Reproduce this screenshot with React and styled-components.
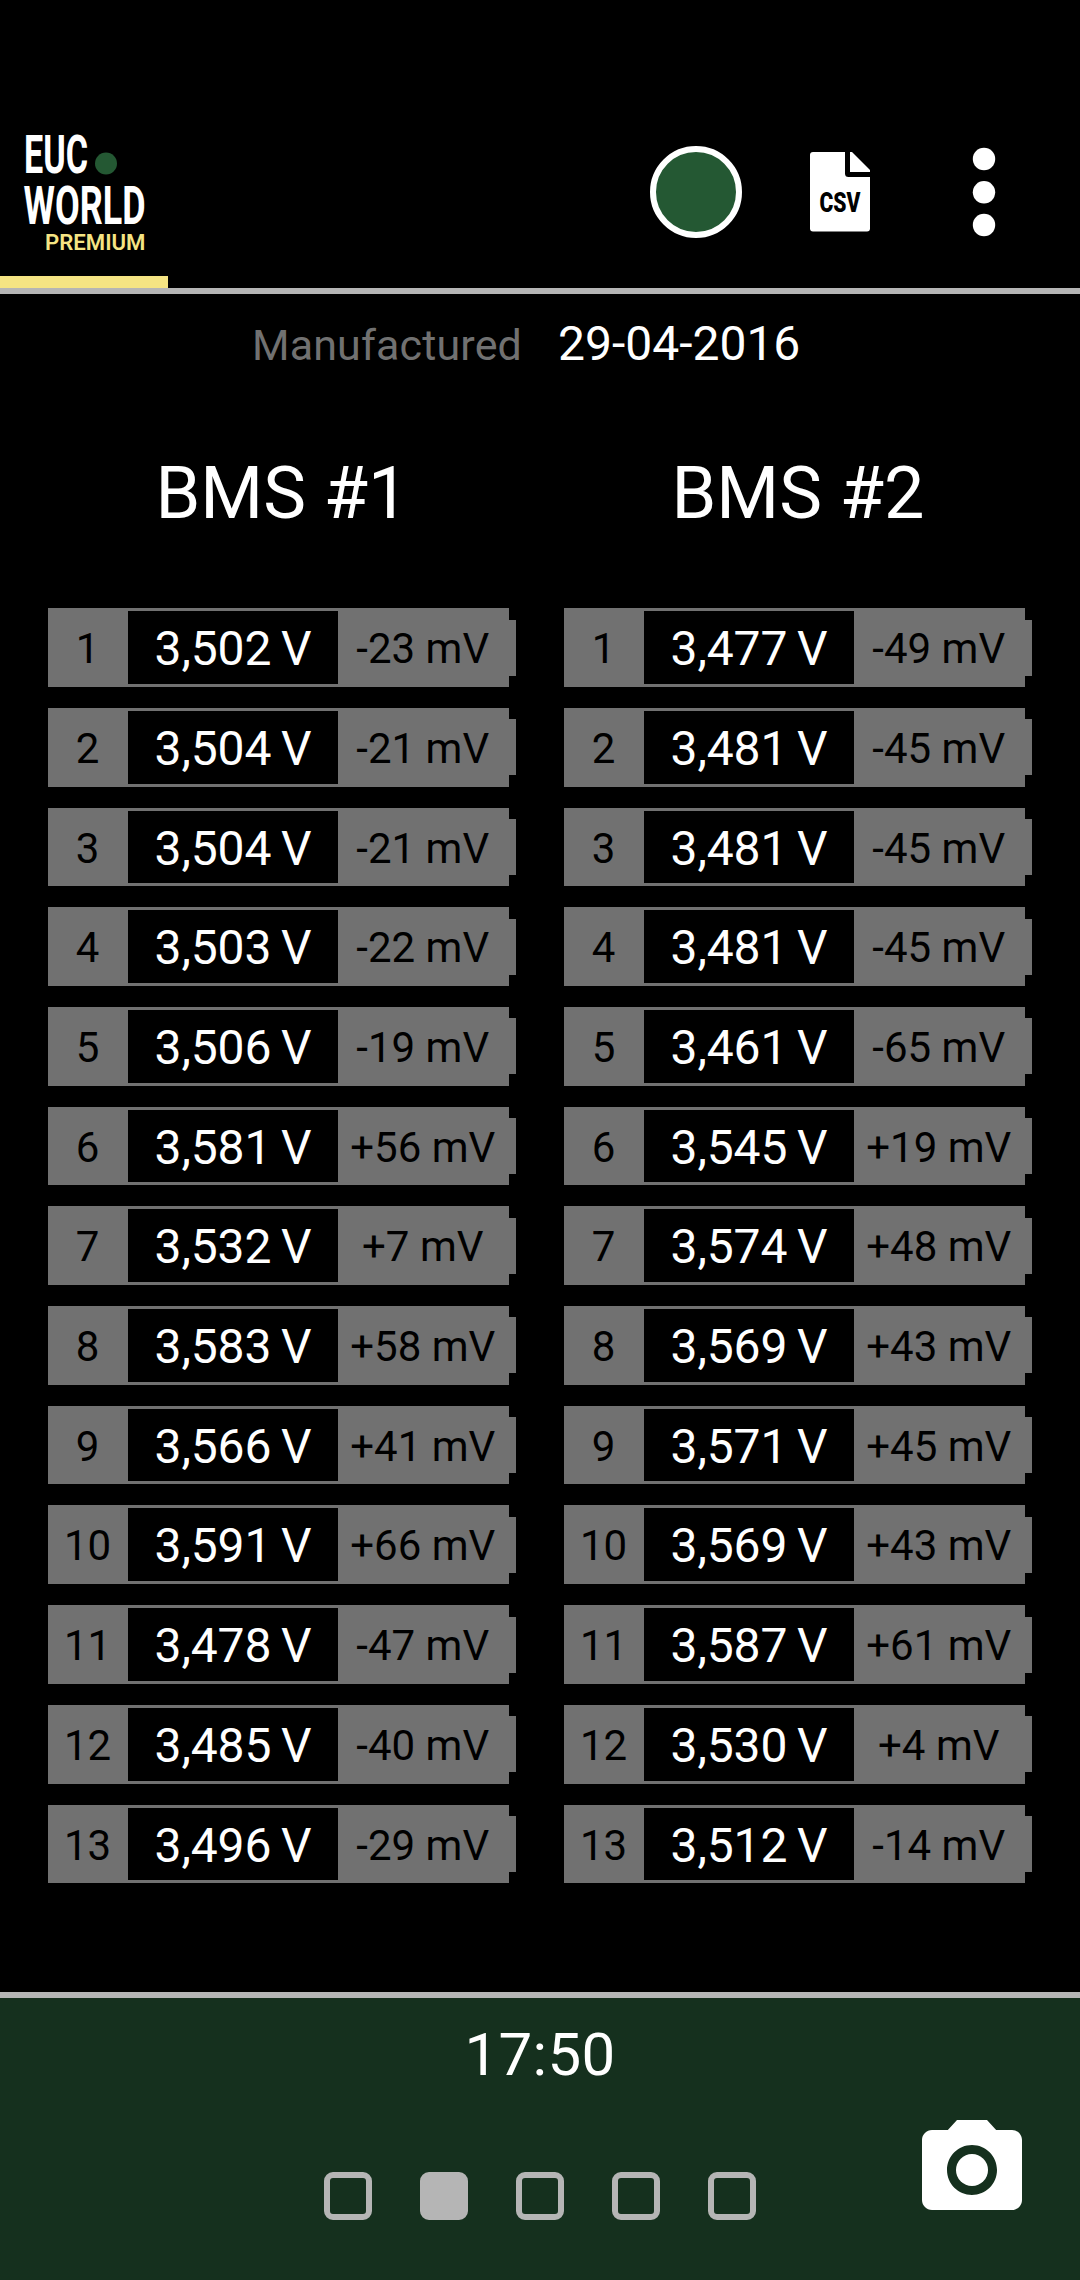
import React from "react";
import styled, { createGlobalStyle } from "styled-components";

const GlobalStyle = createGlobalStyle`
  body {
    margin: 0;
    background: #000;
    font-family: Roboto, "Liberation Sans", sans-serif;
  }
`;

const Screen = styled.div`
  display: flex;
  flex-direction: column;
  width: 1080px;
  height: 2280px;
  overflow: hidden;
  background: #000;
  color: #fff;
`;
const Header = styled.header`
  display: flex;
  flex-direction: column;
  justify-content: flex-end;
  box-sizing: border-box;
  height: 294px;
  border-bottom: 6px solid #b5b5b5;
`;
const Toolbar = styled.div`
  display: flex;
  justify-content: space-between;
  align-items: center;
  height: 168px;
  padding-right: 24px;
`;
const Logo = styled.svg`
  display: block;
  overflow: visible;
  width: 168px;
  height: 168px;
  font-family: Roboto, sans-serif;
`;
const Actions = styled.div`
  display: flex;
`;
const ActionButton = styled.button`
  display: flex;
  align-items: center;
  justify-content: center;
  width: 144px;
  height: 144px;
  padding: 0;
  border: 0;
  background: none;
  cursor: pointer;
`;
const FileIcon = styled.svg`
  display: block;
  overflow: visible;
  width: 60px;
  height: 80px;
  font-family: Roboto, sans-serif;
`;
const TabIndicator = styled.div`
  width: 168px;
  height: 12px;
  background: #f5e483;
`;
const RecordDot = styled.span`
  box-sizing: border-box;
  width: 92px;
  height: 92px;
  border: 6px solid #fff;
  border-radius: 50%;
  background: #245833;
`;
const Content = styled.main`
  flex: 1;
  padding: 18px 48px 0;
`;
const InfoRow = styled.div`
  display: grid;
  grid-template-columns: 474px 1fr;
  column-gap: 36px;
  align-items: baseline;
  height: 64px;
  line-height: 64px;
`;
const InfoLabel = styled.span`
  font-size: 43px;
  letter-spacing: 0.15px;
  color: #717171;
  text-align: right;
`;
const InfoValue = styled.span`
  font-size: 48px;
`;
const Packs = styled.div`
  display: grid;
  grid-template-columns: 1fr 1fr;
  column-gap: 48px;
  padding-top: 69px;
`;
const PackTitle = styled.h2`
  margin: 0 0 65.3px;
  font-size: 72px;
  font-weight: 400;
  line-height: 98px;
  text-align: center;
`;
const CellList = styled.div`
  display: flex;
  flex-direction: column;
  gap: 21px;
`;
const Cell = styled.div`
  display: flex;
  align-items: center;
  height: 78.7px;
`;
const CellBody = styled.div`
  display: grid;
  grid-template-columns: 80px 210px 1fr;
  box-sizing: border-box;
  width: 460.5px;
  height: 100%;
  padding: 3px 0;
  background: #717171;
  line-height: 75.5px;
  text-align: center;
  white-space: nowrap;
`;
const CellTip = styled.div`
  width: 7.5px;
  height: 56px;
  background: #717171;
`;
const CellText = styled.span`
  height: 72.7px;
  padding-right: 1px;
  font-size: 42px;
  color: #000;
`;
const Voltage = styled.span`
  height: 72.7px;
  font-size: 48px;
  letter-spacing: -0.15px;
  word-spacing: -2px;
  background: #000;
`;
const Footer = styled.footer`
  display: grid;
  grid-template-columns: 1fr auto 1fr;
  grid-template-rows: 114px 1fr;
  box-sizing: border-box;
  height: 288px;
  border-top: 6px solid #b5b5b5;
  background: #15301e;
`;
const Clock = styled.div`
  grid-column: 1 / -1;
  font-size: 60px;
  letter-spacing: 0.3px;
  line-height: 113px;
  text-align: center;
`;
const Pager = styled.div`
  grid-column: 2;
  display: flex;
  gap: 48px;
  padding-top: 60px;
  height: 48px;
`;
const Page = styled.span`
  box-sizing: border-box;
  width: 48px;
  height: 48px;
  border: 6px solid #b5b5b5;
  border-radius: 9px;
  background: ${(props) => (props.$active ? "#b5b5b5" : "transparent")};
`;
const CameraButton = styled.button`
  justify-self: end;
  align-self: start;
  margin: -2px 48px 0 0;
  padding: 0;
  border: 0;
  background: none;
  line-height: 0;
  cursor: pointer;
`;

const packs = [
  {
    title: "BMS #1",
    cells: [
      ["3,502", "-23"],
      ["3,504", "-21"],
      ["3,504", "-21"],
      ["3,503", "-22"],
      ["3,506", "-19"],
      ["3,581", "+56"],
      ["3,532", "+7"],
      ["3,583", "+58"],
      ["3,566", "+41"],
      ["3,591", "+66"],
      ["3,478", "-47"],
      ["3,485", "-40"],
      ["3,496", "-29"],
    ],
  },
  {
    title: "BMS #2",
    cells: [
      ["3,477", "-49"],
      ["3,481", "-45"],
      ["3,481", "-45"],
      ["3,481", "-45"],
      ["3,461", "-65"],
      ["3,545", "+19"],
      ["3,574", "+48"],
      ["3,569", "+43"],
      ["3,571", "+45"],
      ["3,569", "+43"],
      ["3,587", "+61"],
      ["3,530", "+4"],
      ["3,512", "-14"],
    ],
  },
];

const fit = (textLength) => ({ textLength, lengthAdjust: "spacingAndGlyphs" });

const BrandLogo = () => (
  <Logo viewBox="0 108 168 168" fill="#fff">
    <text x="24" y="173" fontSize="54" fontWeight="700" {...fit(64)}>
      EUC
    </text>
    <circle cx="106" cy="163.5" r="11" fill="#245833" />
    <text x="23.500" y="224" fontSize="54" fontWeight="700" {...fit(122)}>
      WORLD
    </text>
    <text x="45" y="249.5" fontSize="22.500" fontWeight="600" fill="#f5e483" {...fit(100.5)}>
      PREMIUM
    </text>
  </Logo>
);

const CsvIcon = () => (
  <FileIcon viewBox="0 0 60 80" fill="#fff">
    <path d="M3 0H35V21.500Q35 25 38.500 25H60V76.500Q60 79.500 57 79.500H3Q0 79.500 0 76.500V3Q0 0 3 0Z" />
    <path d="M40 0H42L60 18V20H40Z" />
    <text x="9.500" y="59.500" fontSize="28" fontWeight="900" fill="#000" {...fit(41)}>
      CSV
    </text>
  </FileIcon>
);

const MenuIcon = () => (
  <svg width="24" height="90" viewBox="0 0 24 90" fill="#fff">
    <circle cx="12" cy="12" r="11.200" />
    <circle cx="12" cy="45.300" r="11.200" />
    <circle cx="12" cy="78" r="11.200" />
  </svg>
);

const CameraIcon = () => (
  <svg width="120" height="120" viewBox="0 0 24 24" fill="#fff">
    <circle cx="12" cy="12" r="3.2" />
    <path d="M9 2L7.17 4H4c-1.100 0-2 .9-2 2v12c0 1.100.9 2 2 2h16c1.100 0 2-.9 2-2V6c0-1.100-.9-2-2-2h-3.170L15 2H9zm3 15c-2.760 0-5-2.240-5-5s2.240-5 5-5 5 2.240 5 5-2.240 5-5 5z" />
  </svg>
);

const Pack = (props) => (
  <section>
    <PackTitle>{props.title}</PackTitle>
    <CellList>
      {props.cells.map(([voltage, delta], index) => (
        <Cell key={index}>
          <CellBody>
            <CellText>{index + 1}</CellText>
            <Voltage>{`${voltage} V`}</Voltage>
            <CellText>{`${delta} mV`}</CellText>
          </CellBody>
          <CellTip />
        </Cell>
      ))}
    </CellList>
  </section>
);

const App = () => (
  <React.Fragment>
    <GlobalStyle />
    <Screen>
      <Header>
        <Toolbar>
          <BrandLogo />
          <Actions>
            <ActionButton aria-label="Record">
              <RecordDot />
            </ActionButton>
            <ActionButton aria-label="Export">
              <CsvIcon />
            </ActionButton>
            <ActionButton aria-label="Menu">
              <MenuIcon />
            </ActionButton>
          </Actions>
        </Toolbar>
        <TabIndicator />
      </Header>
      <Content>
        <InfoRow>
          <InfoLabel>Manufactured</InfoLabel>
          <InfoValue>29-04-2016</InfoValue>
        </InfoRow>
        <Packs>
          {packs.map((pack) => (
            <Pack key={pack.title} title={pack.title} cells={pack.cells} />
          ))}
        </Packs>
      </Content>
      <Footer>
        <Clock>17:50</Clock>
        <Pager>
          {[0, 1, 2, 3, 4].map((page) => (
            <Page key={page} $active={page === 1} />
          ))}
        </Pager>
        <CameraButton aria-label="Screenshot">
          <CameraIcon />
        </CameraButton>
      </Footer>
    </Screen>
  </React.Fragment>
);
export default App;
